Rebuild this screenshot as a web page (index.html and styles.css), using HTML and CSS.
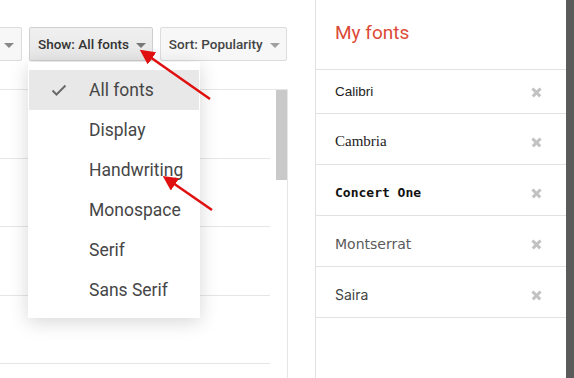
FILE: index.html
```html
<!DOCTYPE html>
<html>
  <head>
    <title>Fonts</title>
    <link rel="stylesheet" href="styles.css">
  </head>
  <body>
    <div class="app">
      <div class="browse">
        <div class="toolbar">
          <button class="drop cut"><span class="caret"></span></button>
          <div class="drop-wrap">
            <button class="drop active">Show: All fonts <span class="caret"></span></button>
            <ul class="menu">
              <li class="selected">
                <svg class="check" width="16" height="12" viewBox="0 0 16 12"><polyline points="1.5,6.5 5.5,10.5 14.5,1.5" fill="none" stroke="#6a6a6a" stroke-width="2"/></svg>
                All fonts
              </li>
              <li>Display</li>
              <li>Handwriting</li>
              <li>Monospace</li>
              <li>Serif</li>
              <li>Sans Serif</li>
            </ul>
          </div>
          <button class="drop">Sort: Popularity <span class="caret light"></span></button>
        </div>
        <div class="results">
          <div class="rows">
            <div class="row"></div>
            <div class="row"></div>
            <div class="row"></div>
            <div class="row"></div>
          </div>
          <div class="track"><div class="thumb"></div></div>
        </div>
      </div>

      <aside class="mine">
        <h2>My fonts</h2>
        <div class="font-row short"><span class="f-calibri">Calibri</span><span class="remove"></span></div>
        <div class="font-row"><span class="f-cambria">Cambria</span><span class="remove"></span></div>
        <div class="font-row"><span class="f-concert">Concert One</span><span class="remove"></span></div>
        <div class="font-row"><span class="f-montserrat">Montserrat</span><span class="remove"></span></div>
        <div class="font-row"><span class="f-saira">Saira</span><span class="remove"></span></div>
      </aside>

      <div class="edge"></div>
    </div>

    <!-- annotation arrows -->
    <svg class="arrows" width="574" height="378" viewBox="0 0 574 378">
      <defs>
        <marker id="head" markerWidth="6" markerHeight="6" refX="1" refY="3" orient="auto" markerUnits="strokeWidth">
          <path d="M0,0 L6,3 L0,6 z" fill="#e01010"/>
        </marker>
      </defs>
      <line x1="210" y1="99" x2="150" y2="57" stroke="#e01010" stroke-width="2.5" marker-end="url(#head)"/>
      <line x1="212" y1="210" x2="173" y2="183" stroke="#e01010" stroke-width="2.5" marker-end="url(#head)"/>
    </svg>
  </body>
</html>
```

FILE: styles.css
```css
body {
  margin: 0;
  height: 378px;
  overflow: hidden;
  background: #fff;
  font-family: Roboto, "Liberation Sans", sans-serif;
  position: relative;
}

.app {
  display: flex;
  height: 378px;
}

/* left: browse column */

.browse {
  width: 315px;
  flex: none;
  display: flex;
  flex-direction: column;
}

.toolbar {
  display: flex;
  gap: 7px;
  padding-top: 27px;
}

.drop {
  height: 34px;
  padding: 0 6px 0 8px;
  display: flex;
  align-items: center;
  gap: 7px;
  font-family: Roboto, sans-serif;
  font-size: 13.5px;
  font-weight: 500;
  color: #444;
  background: #f7f7f7;
  border: 1px solid #dcdcdc;
  border-radius: 2px;
  white-space: nowrap;
}

.drop.cut {
  width: 40px;
  margin-left: -18px;
  justify-content: flex-end;
}

.drop.active {
  background: linear-gradient(#f0f0f0, #e6e6e6);
  border-color: #cfcfcf;
  color: #333;
  box-shadow: 0 1px 1px rgba(0, 0, 0, 0.06);
}

.caret {
  width: 0;
  height: 0;
  border-left: 5px solid transparent;
  border-right: 5px solid transparent;
  border-top: 5px solid #777;
  margin-top: 2px;
}

.caret.light {
  border-top-color: #a0a0a0;
}

.drop.cut .caret {
  border-top-color: #888;
  margin-right: 1px;
}

.drop-wrap {
  position: relative;
}

.menu {
  position: absolute;
  top: 35px;
  left: -1px;
  width: 172px;
  margin: 0;
  padding: 8px 0;
  list-style: none;
  background: #fff;
  box-shadow: 0 4px 18px rgba(0, 0, 0, 0.16);
  z-index: 2;
}

.menu li {
  position: relative;
  height: 40px;
  line-height: 40px;
  padding-left: 61px;
  font-size: 17.5px;
  color: #464646;
}

.menu li.selected {
  background: #e8e8e8;
  margin: 0 1px;
  padding-left: 60px;
}

.check {
  position: absolute;
  left: 22px;
  top: 14px;
}

.results {
  flex: 1;
  margin-top: 28px;
  width: 287px;
  display: flex;
  gap: 6px;
  border-top: 1px solid #e6e6e6;
  border-right: 1px solid #e6e6e6;
}

.rows {
  width: 270px;
}

.row {
  height: 67.5px;
  border-bottom: 1px solid #e6e6e6;
}

.track {
  width: 11px;
}

.thumb {
  height: 90px;
  background: #c9c9c9;
}

/* right: my fonts panel */

.mine {
  width: 250px;
  flex: none;
  border-left: 1px solid #e2e2e2;
}

.mine h2 {
  margin: 0;
  height: 69px;
  padding-left: 19px;
  line-height: 66px;
  font-size: 19px;
  font-weight: 400;
  color: #dc4a38;
  border-bottom: 1px solid #e2e2e2;
}

.font-row {
  height: 45px;
  padding: 5px 25px 0 19px;
  display: flex;
  align-items: center;
  justify-content: space-between;
  border-bottom: 1px solid #e2e2e2;
  color: #222;
}

.font-row.short {
  height: 43px;
  padding-top: 0;
}

.remove {
  position: relative;
  width: 9px;
  height: 9px;
}

.remove::before,
.remove::after {
  content: "";
  position: absolute;
  left: -1px;
  top: 3.5px;
  width: 11px;
  height: 2.5px;
  background: #c2c2c2;
  transform: rotate(45deg);
}

.remove::after {
  transform: rotate(-45deg);
}

.f-calibri {
  font-family: "Liberation Sans", sans-serif;
  font-size: 13.5px;
}

.f-cambria {
  font-family: "Liberation Serif", serif;
  font-size: 15px;
}

.f-concert {
  font-family: "DejaVu Sans Mono", monospace;
  font-weight: bold;
  font-size: 13px;
  color: #111;
}

.f-montserrat {
  font-family: "DejaVu Sans", sans-serif;
  font-size: 14px;
  color: #5a5a5a;
}

.f-saira {
  font-family: Inter, sans-serif;
  font-size: 14px;
  color: #444;
}

.edge {
  width: 8px;
  flex: none;
  background: #5b5b5b;
}

.arrows {
  position: absolute;
  top: 0;
  left: 0;
  pointer-events: none;
  z-index: 5;
}
```
